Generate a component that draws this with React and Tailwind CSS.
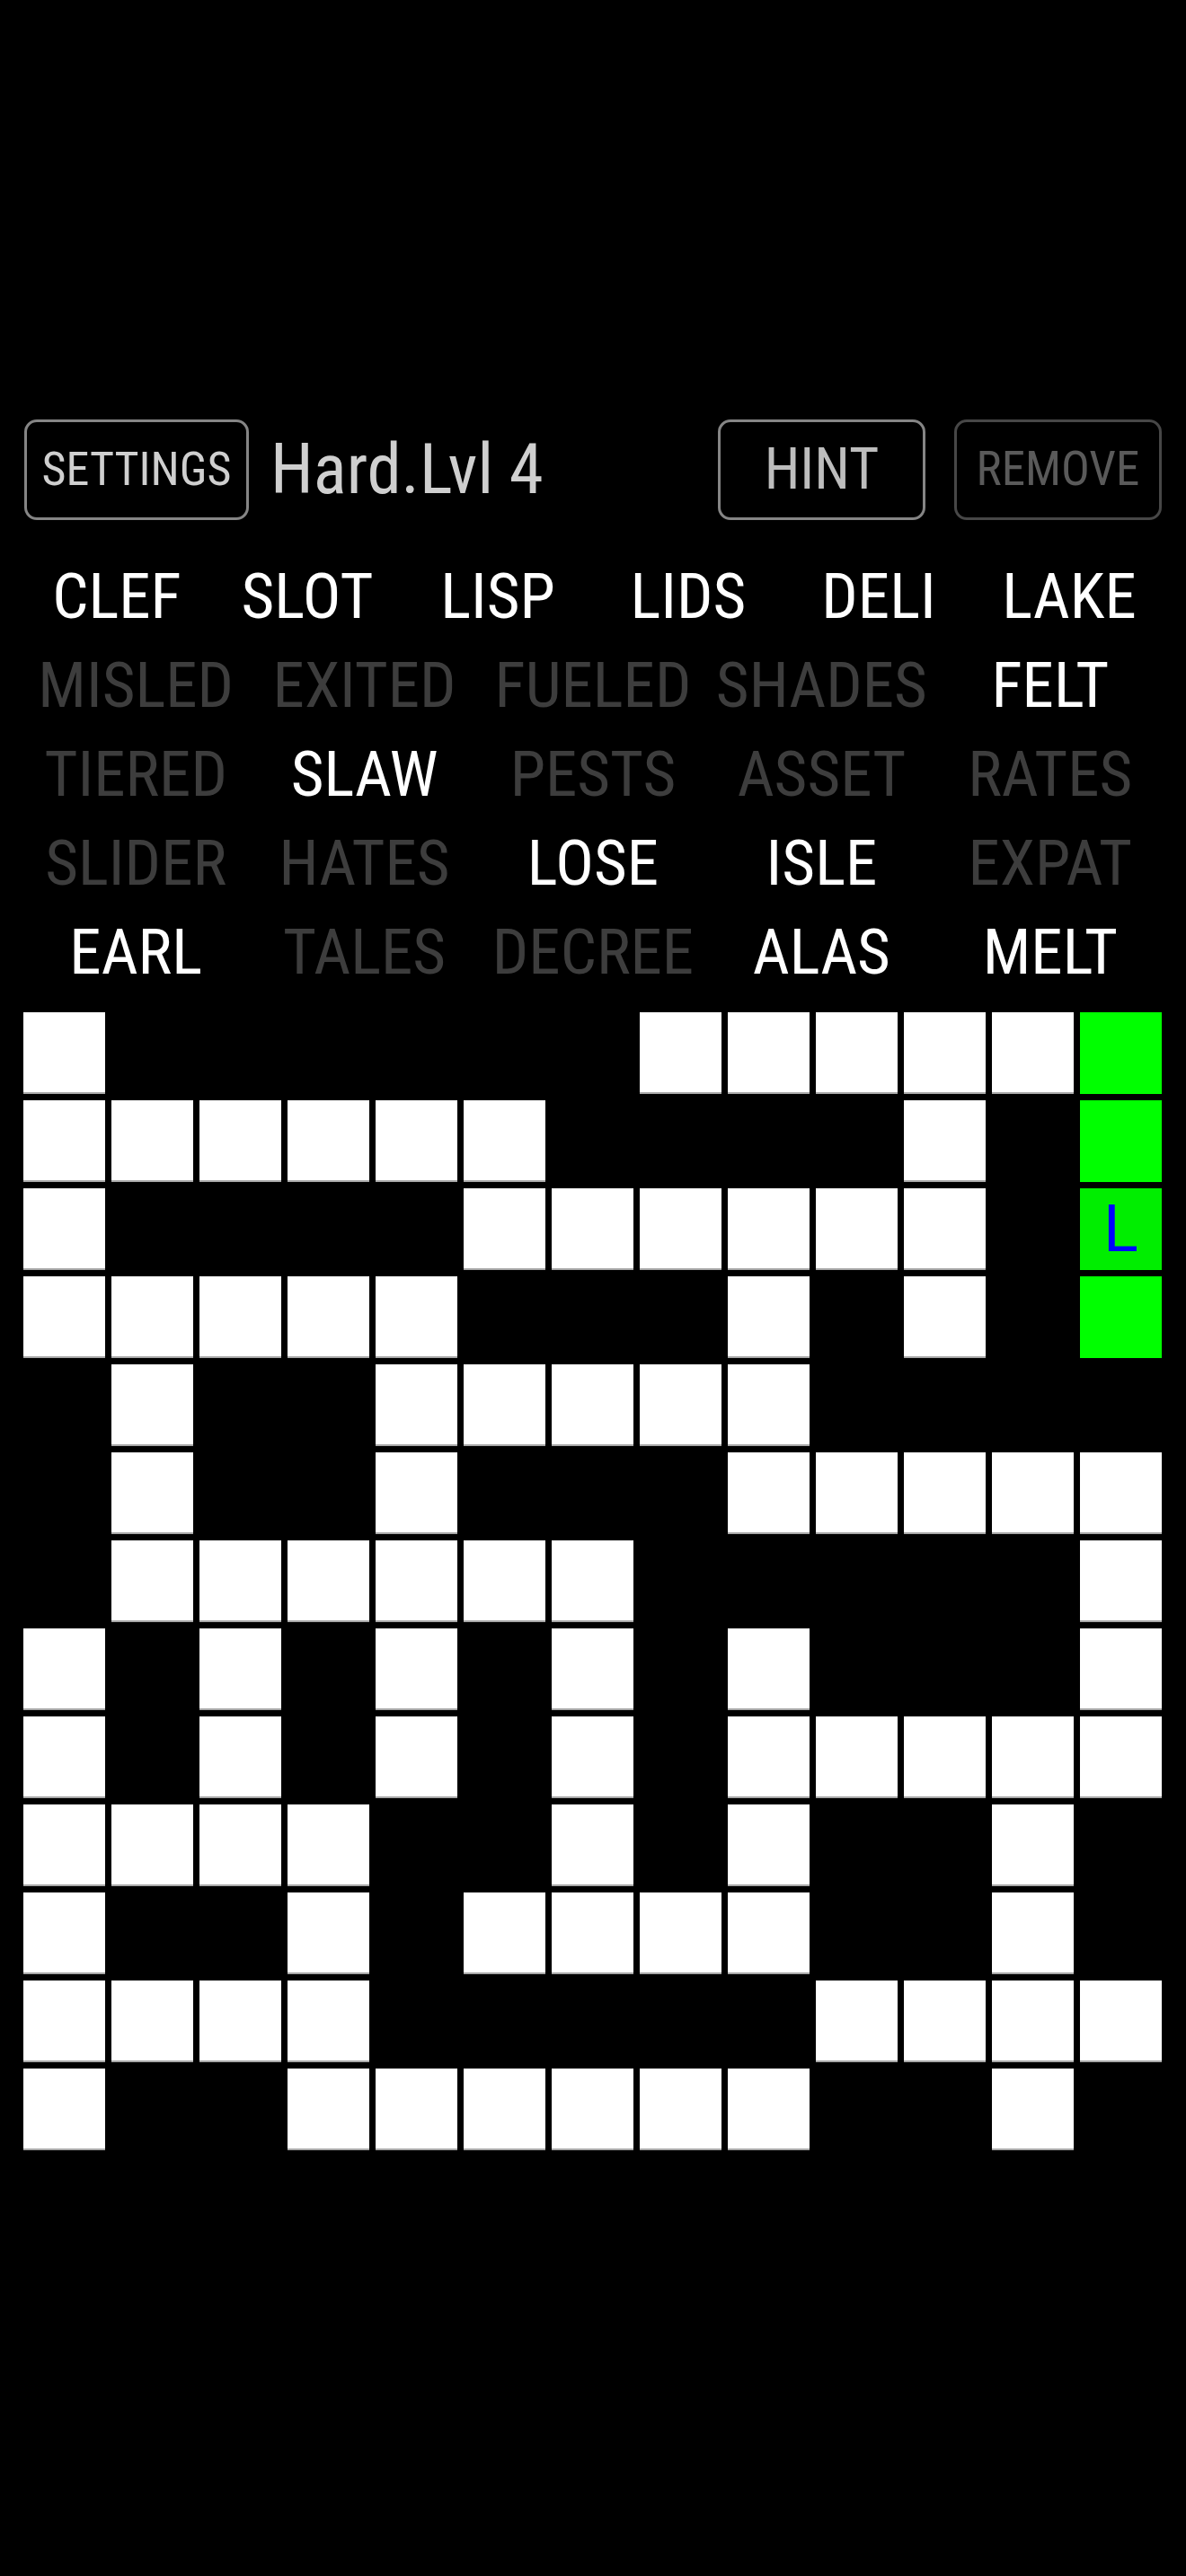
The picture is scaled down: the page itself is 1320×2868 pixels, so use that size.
const FONT = {
  fontFamily: '"Roboto Condensed", "Liberation Sans Narrow", "DejaVu Sans Condensed", "Liberation Sans", sans-serif',
};

const WORD_ROWS = [
  [
    ["CLEF", true],
    ["SLOT", true],
    ["LISP", true],
    ["LIDS", true],
    ["DELI", true],
    ["LAKE", true],
  ],
  [
    ["MISLED", false],
    ["EXITED", false],
    ["FUELED", false],
    ["SHADES", false],
    ["FELT", true],
  ],
  [
    ["TIERED", false],
    ["SLAW", true],
    ["PESTS", false],
    ["ASSET", false],
    ["RATES", false],
  ],
  [
    ["SLIDER", false],
    ["HATES", false],
    ["LOSE", true],
    ["ISLE", true],
    ["EXPAT", false],
  ],
  [
    ["EARL", true],
    ["TALES", false],
    ["DECREE", false],
    ["ALAS", true],
    ["MELT", true],
  ],
];

// # = empty white cell, G = hinted green cell, L = green cell holding a letter
const BOARD = [
  "#......#####G",
  "######....#.G",
  "#....######.L",
  "#####...#.#.G",
  ".#..#####....",
  ".#..#...#####",
  ".######.....#",
  "#.#.#.#.#...#",
  "#.#.#.#.#####",
  "####..#.#..#.",
  "#..#.####..#.",
  "####.....####",
  "#..######..#.",
];

function Cell({ kind }) {
  if (kind === ".") return <div className="h-[91px] w-[91px]" />;
  if (kind === "G") return <div className="h-[91px] w-[91px] bg-[#00ff00]" />;
  if (kind === "L")
    return (
      <div className="h-[91px] w-[91px] bg-[#00ee00] flex items-center justify-center text-[72px] leading-none text-[#0000ff]" style={{ fontFamily: '"Roboto", "Liberation Sans", sans-serif' }}>
        L
      </div>
    );
  return <div className="h-[91px] w-[91px] bg-white border-b-2 border-[#a8a8a8]" />;
}

export default function App() {
  return (
    <main className="min-h-[2868px] w-[1320px] bg-black pt-[467px]" style={FONT}>
      <header className="flex items-center px-[27px] h-[112px]">
        <button className="h-[112px] w-[250px] rounded-[14px] border-[3px] border-[#858585] text-[52px] text-[#cfcfcf] flex items-center justify-center">
          SETTINGS
        </button>
        <span className="ml-[24px] text-[77px] text-[#cfcfcf] leading-none">Hard.Lvl 4</span>
        <button className="ml-auto h-[112px] w-[231px] rounded-[14px] border-[3px] border-[#858585] text-[64px] text-[#bdbdbd] flex items-center justify-center">
          HINT
        </button>
        <button className="ml-[32px] h-[112px] w-[231px] rounded-[14px] border-[3px] border-[#474747] text-[53px] text-[#5a5a5a] flex items-center justify-center">
          REMOVE
        </button>
      </header>

      <section className="mt-[35px] px-[24px]">
        {WORD_ROWS.map((row, i) => (
          <div
            key={i}
            className={row.length === 6 ? "grid grid-cols-6 h-[99px]" : "grid grid-cols-5 h-[99px]"}
          >
            {row.map(([word, active]) => (
              <span
                key={word}
                className={
                  active
                    ? "text-center text-[71px] leading-[99px] text-white"
                    : "text-center text-[71px] leading-[99px] text-[#3d3d3d]"
                }
              >
                {word}
              </span>
            ))}
          </div>
        ))}
      </section>

      <section className="mt-[18px] pl-[26px] grid grid-cols-[repeat(13,91px)] gap-[7px]">
        {BOARD.map((line, r) =>
          line.split("").map((kind, c) => <Cell key={r + "-" + c} kind={kind} />)
        )}
      </section>
    </main>
  );
}
